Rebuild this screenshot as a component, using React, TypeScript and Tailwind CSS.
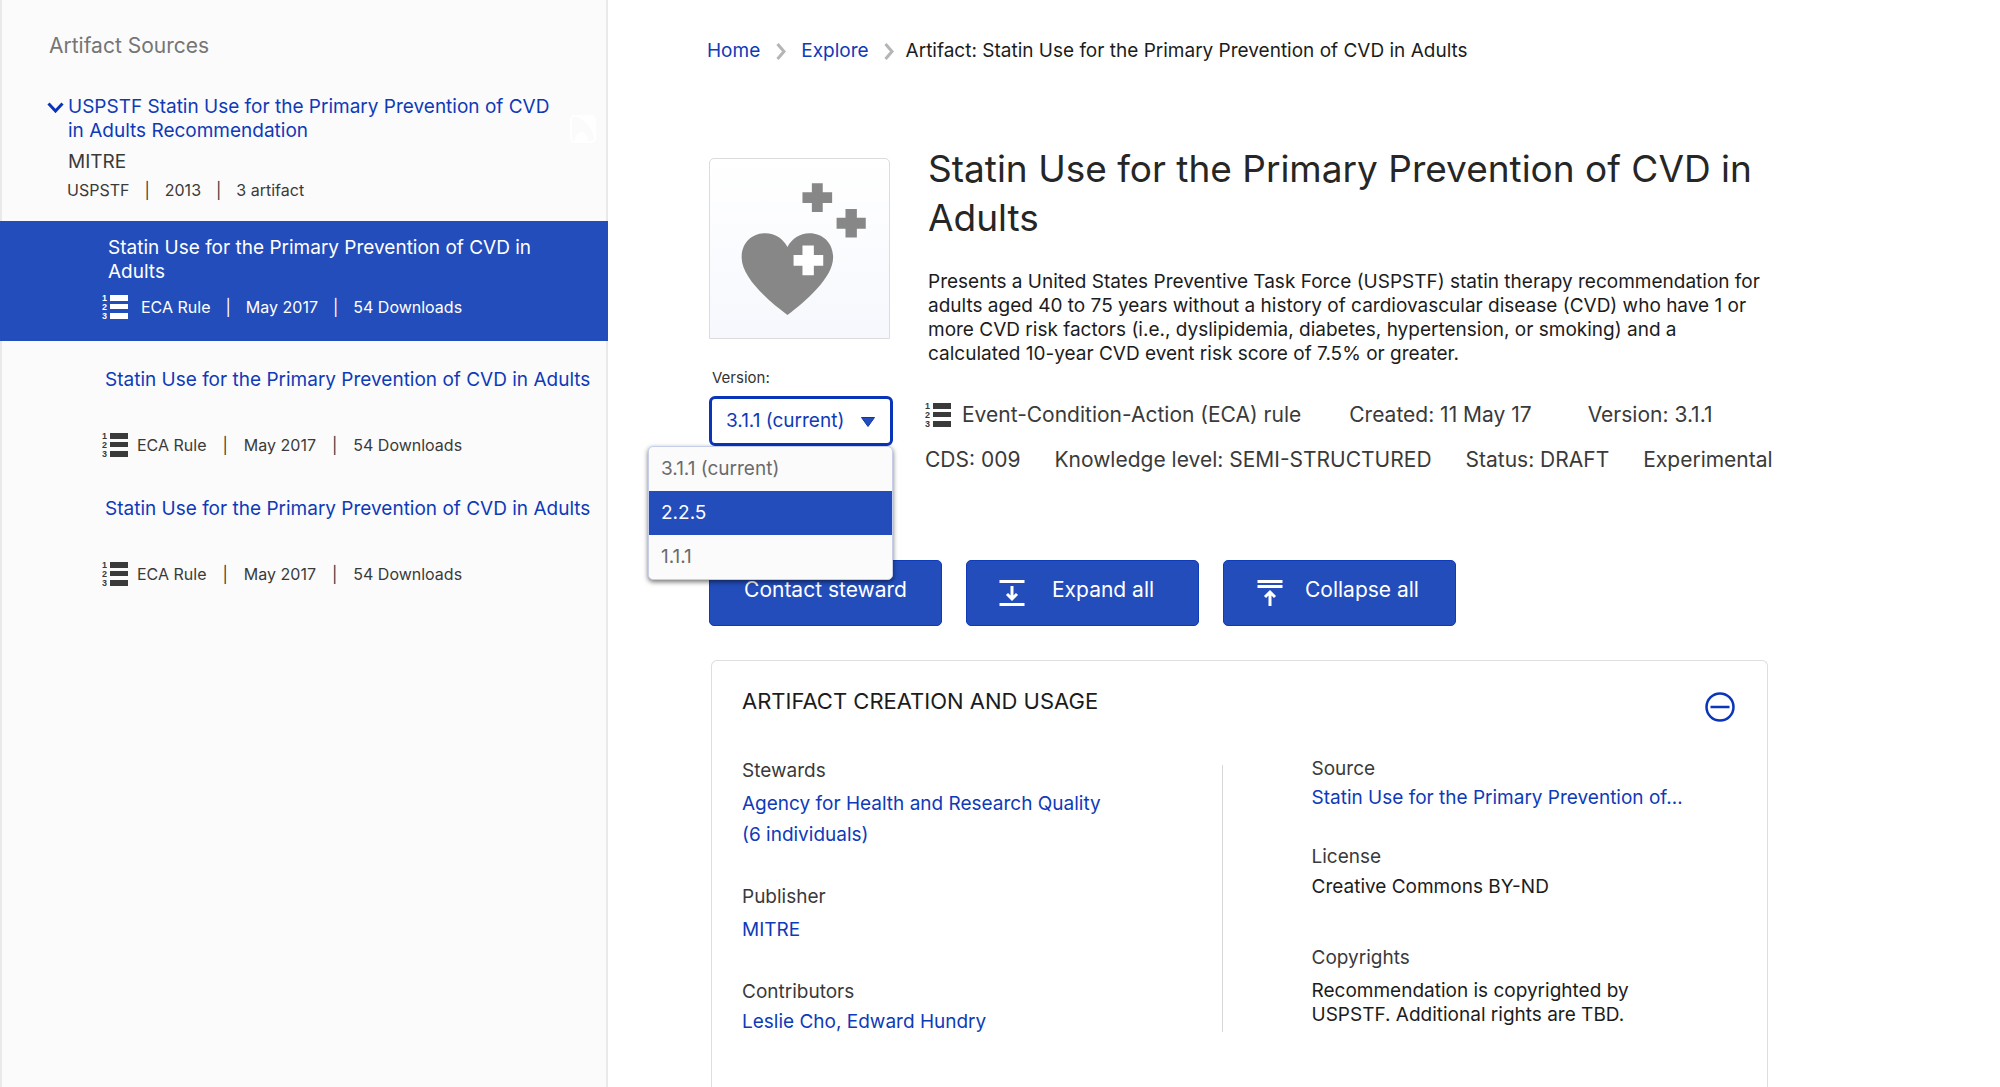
import { useState } from "react";

const ARTIFACT = "Statin Use for the Primary Prevention of CVD in Adults";
const VERSIONS = ["3.1.1 (current)", "2.2.5", "1.1.1"];

function NumberedListIcon() {
  return (
    <svg viewBox="0 0 27 26" className="h-[26px] w-[27px] shrink-0" fill="currentColor" aria-hidden="true">
      <g fontFamily="Liberation Sans, sans-serif" fontSize="9" fontWeight="700">
        <text x="0" y="7">1</text>
        <text x="0" y="16">2</text>
        <text x="0" y="25">3</text>
      </g>
      <rect x="8" y="1" width="18" height="6" />
      <rect x="8" y="10" width="18" height="5" />
      <rect x="8" y="19" width="18" height="6" />
    </svg>
  );
}

function BreadcrumbChevron() {
  return (
    <svg viewBox="0 0 10 17" className="h-[17px] w-[10px] shrink-0" fill="none" stroke="#b5b5b5" strokeWidth="3" aria-hidden="true">
      <path d="M1.5 1 8 8.5 1.5 16" />
    </svg>
  );
}

function ExpandIcon() {
  return (
    <svg viewBox="0 0 26 28" className="h-7 w-[26px] shrink-0" fill="none" stroke="white" strokeWidth="3" aria-hidden="true">
      <path d="M0.5 2.5h25M0.5 25.5h25M13 7v12M8 15l5 5 5-5" />
    </svg>
  );
}

function CollapseIcon() {
  return (
    <svg viewBox="0 0 26 28" className="h-7 w-[26px] shrink-0" fill="none" stroke="white" strokeWidth="3" aria-hidden="true">
      <path d="M0.5 2.5h25M0.5 7.5h25M13 27V14M8 18l5-5 5 5" />
    </svg>
  );
}

function HeartIcon() {
  return (
    <svg viewBox="0 0 181 181" className="h-full w-full" aria-hidden="true">
      <path
        fill="#878787"
        d="M78.3 157.7C60 144 32 120 32 99.5 32 85 42 75 56 75c10 0 18 5.500 22.300 14C82.500 80.500 91 75 100.500 75c14 0 24 10 24 24.500 0 20.500-28 44.500-46.200 58.200z"
      />
      <path fill="#878787" d="M103 24.500h11v9h9.500v11H114v9h-11v-9h-9.500v-11h9.500z" />
      <path fill="#878787" d="M137 50.500h11.500v9h9v11h-9v9H137v-9h-9v-11h9z" />
      <path fill="white" d="M93.500 87.500H105v9.500h9.500v11H105v9.500H93.500V108h-9V97h9z" />
    </svg>
  );
}

function Meta({ items }: { items: string[] }) {
  return (
    <>
      {items.map((item, i) => (
        <span key={item} className="contents">
          {i > 0 && <span>|</span>}
          <span>{item}</span>
        </span>
      ))}
    </>
  );
}

function Sidebar() {
  const meta = ["ECA Rule", "May 2017", "54 Downloads"];
  return (
    <aside className="border-x-2 border-[#e9e9e9] bg-[#fbfbfb] text-[19px] leading-6 text-[#3a3a3a]">
      <h2 className="pt-[34px] pl-[47px] text-[21px] text-[#757575]">Artifact Sources</h2>
      <div className="mt-[37px] flex items-start pr-2.5 pl-[45px]">
        <button type="button" aria-label="Collapse source" className="mt-[7px] h-[11px] w-[17px] shrink-0">
          <svg viewBox="0 0 17 11" className="h-full w-full" fill="none" stroke="#0b35b8" strokeWidth="3">
            <path d="M1.500 1.500 8.500 9l7-7.500" />
          </svg>
        </button>
        <a href="#source" className="ml-1 flex-1 text-[#0f3ab8]">
          USPSTF Statin Use for the Primary Prevention of CVD in Adults Recommendation
        </a>
        <svg viewBox="0 0 26 28" className="mt-5 ml-4 h-7 w-[26px] shrink-0" fill="white" aria-hidden="true">
          <rect x="1" y="1" width="24" height="26" rx="4" fill="none" stroke="white" strokeWidth="2" />
          <path d="M8 2h16v20C22 13 17 7 8 2zM5 26c0-12 13-12 13 0z" />
        </svg>
      </div>
      <p className="mt-[7px] pl-[66px]">MITRE</p>
      <p className="mt-1 flex gap-[15px] pl-[65px] text-base leading-6">
        <Meta items={["USPSTF", "2013", "3 artifact"]} />
      </p>

      <article className="-mx-0.5 mt-[19px] bg-[#234dbb] pt-[15px] pr-12 pb-[22px] text-white">
        <a href="#artifact-1" className="block pl-[108px]">{ARTIFACT}</a>
        <div className="mt-[11px] flex h-6 items-center gap-3 pl-[102px]">
          <NumberedListIcon />
          <p className="flex gap-[15px] text-base leading-6">
            <Meta items={meta} />
          </p>
        </div>
      </article>

      <div className="flex flex-col gap-10 pt-[27px]">
        {[2, 3].map((n) => (
          <article key={n}>
            <a href={`#artifact-${n}`} className="block pl-[103px] whitespace-nowrap text-[#0f3ab8]">{ARTIFACT}</a>
            <div className="mt-[41px] flex h-6 items-center gap-2 pl-[100px]">
              <NumberedListIcon />
              <p className="flex gap-4 text-base leading-6">
                <Meta items={meta} />
              </p>
            </div>
          </article>
        ))}
      </div>
    </aside>
  );
}

function VersionPicker() {
  const [version, setVersion] = useState(VERSIONS[0]);
  return (
    <div className="mt-[29px]">
      <label htmlFor="version" className="ml-[3px] block text-[15px] leading-5 text-[#333]">Version:</label>
      <div className="relative mt-2">
        <select
          id="version"
          value={version}
          onChange={(e) => setVersion(e.target.value)}
          className="h-[50px] w-full appearance-none rounded-md border-3 border-[#0b35b8] bg-white pl-3.5 text-[19px] text-[#0f3ab8] outline-none"
        >
          {VERSIONS.map((v) => (
            <option key={v}>{v}</option>
          ))}
        </select>
        <svg viewBox="0 0 14 10" className="pointer-events-none absolute top-[21px] right-[18px] h-2.5 w-3.5" aria-hidden="true">
          <path d="M0.500 0.500h13L7 9.500z" fill="#234dbb" stroke="#0b35b8" />
        </svg>
        <ul
          role="listbox"
          aria-label="Versions"
          className="absolute top-full right-0 z-10 w-[245px] overflow-hidden rounded-[5px] border border-[#c5cfea] bg-[#fbfbfb] text-[19px] leading-[44px] text-[#6b6b6b] shadow-[0_2px_5px_rgba(0,0,0,0.55)]"
        >
          {VERSIONS.map((v, i) => (
            <li
              key={v}
              role="option"
              aria-selected={i === 1}
              className={i === 1 ? "bg-[#234dbb] pl-3 text-white" : "pl-3"}
            >
              {v}
            </li>
          ))}
        </ul>
      </div>
    </div>
  );
}

function Hero() {
  return (
    <section className="mt-[81px] ml-1 flex gap-8">
      <div className="w-[184px] shrink-0 pt-3.5">
        <div className="mr-[3px] aspect-square overflow-hidden rounded-t-[5px] border border-[#dcdcdc] bg-linear-to-b from-white to-[#f6f8fd]">
          <HeartIcon />
        </div>
        <VersionPicker />
      </div>
      <div className="min-w-0 flex-1">
        <h1 className="ml-[3px] text-[37px] leading-[49px] text-[#262626]">{ARTIFACT}</h1>
        <p className="mt-7 mr-2 ml-[3px] text-[19px] leading-6 text-[#1c1c1c]">
          Presents a United States Preventive Task Force (USPSTF) statin therapy recommendation for adults aged 40 to 75
          years without a history of cardiovascular disease (CVD) who have 1 or more CVD risk factors (i.e.,
          dyslipidemia, diabetes, hypertension, or smoking) and a calculated 10-year CVD event risk score of 7.5% or
          greater.
        </p>
        <div className="mt-[35px] flex items-center text-[21px] leading-7 whitespace-nowrap text-[#3a3a3a]">
          <NumberedListIcon />
          <span className="ml-2.5">Event-Condition-Action (ECA) rule</span>
          <span className="ml-12">Created: 11 May 17</span>
          <span className="ml-14">Version: 3.1.1</span>
        </div>
        <div className="mt-[17px] flex gap-[34px] text-[21px] leading-7 whitespace-nowrap text-[#3a3a3a]">
          <span>CDS: 009</span>
          <span>Knowledge level: SEMI-STRUCTURED</span>
          <span>Status: DRAFT</span>
          <span>Experimental</span>
        </div>
      </div>
    </section>
  );
}

function Actions() {
  const button = "flex h-[66px] w-[233px] items-center rounded-[5px] border border-[#0f3ab8] bg-[#234dbb]";
  return (
    <div className="mt-[86px] ml-1 flex gap-6 text-[21px] text-white">
      <button type="button" className={`${button} justify-center`}>
        <span className="pb-1.5">Contact steward</span>
      </button>
      <button type="button" className={`${button} gap-[27px] pl-8`}>
        <ExpandIcon />
        <span className="pb-1.5">Expand all</span>
      </button>
      <button type="button" className={`${button} gap-[22px] pl-[33px]`}>
        <CollapseIcon />
        <span className="pb-1.5">Collapse all</span>
      </button>
    </div>
  );
}

function UsagePanel() {
  const link = "text-[#0f3ab8]";
  return (
    <section className="mt-[34px] mr-[7px] ml-1.5 flex-1 rounded-t-md border border-b-0 border-[#dedede] pt-7 pr-8 pb-12 pl-[30px] text-[19px] leading-6 text-[#1c1c1c]">
      <div className="flex items-start justify-between">
        <h2 className="text-[22px] leading-6">ARTIFACT CREATION AND USAGE</h2>
        <button type="button" aria-label="Collapse section" className="mt-[3px]">
          <svg viewBox="0 0 30 30" className="size-[30px]" fill="none" stroke="#0b35b8" strokeWidth="2.500">
            <circle cx="15" cy="15" r="13.500" />
            <path d="M5.500 15h19" />
          </svg>
        </button>
      </div>
      <div className="mt-[35px] grid grid-cols-[480fr_1px_513fr]">
        <dl className="pt-0.5">
          <dt className="text-[#3a3a3a]">Stewards</dt>
          <dd className="mt-[5px] leading-[31px]">
            <a href="#ahrq" className={link}>Agency for Health and Research Quality</a>
            <br />
            <a href="#individuals" className={link}>(6 individuals)</a>
          </dd>
          <dt className="mt-[35px] text-[#3a3a3a]">Publisher</dt>
          <dd className="mt-[9px]">
            <a href="#mitre" className={link}>MITRE</a>
          </dd>
          <dt className="mt-[38px] text-[#3a3a3a]">Contributors</dt>
          <dd className="mt-1.5">
            <a href="#contributors" className={link}>Leslie Cho, Edward Hundry</a>
          </dd>
        </dl>
        <div className="mt-2 mb-0.5 bg-[#d8d8d8]" />
        <dl className="pl-[89px]">
          <dt className="text-[#3a3a3a]">Source</dt>
          <dd className="mt-[5px]">
            <a href="#artifact-1" className={link}>Statin Use for the Primary Prevention of…</a>
          </dd>
          <dt className="mt-[35px] text-[#3a3a3a]">License</dt>
          <dd className="mt-1.5">Creative Commons BY-ND</dd>
          <dt className="mt-[47px] text-[#3a3a3a]">Copyrights</dt>
          <dd className="mt-[9px] max-w-[360px]">
            Recommendation is copyrighted by USPSTF. Additional rights are TBD.
          </dd>
        </dl>
      </div>
    </section>
  );
}

export default function App() {
  return (
    <div className="grid min-h-screen grid-cols-[608fr_1392fr] bg-white font-['Inter',sans-serif]">
      <Sidebar />
      <main className="flex w-full max-w-[1167px] flex-col pl-[97px]">
        <nav aria-label="Breadcrumb" className="flex items-center pt-[39px] pl-0.5 text-[19px] leading-6 text-[#1c1c1c]">
          <a href="#home" className="mr-4 text-[#0f3ab8]">Home</a>
          <BreadcrumbChevron />
          <a href="#explore" className="mx-[15px] text-[#0f3ab8]">Explore</a>
          <BreadcrumbChevron />
          <span className="ml-3">Artifact: {ARTIFACT}</span>
        </nav>
        <Hero />
        <Actions />
        <UsagePanel />
      </main>
    </div>
  );
}
